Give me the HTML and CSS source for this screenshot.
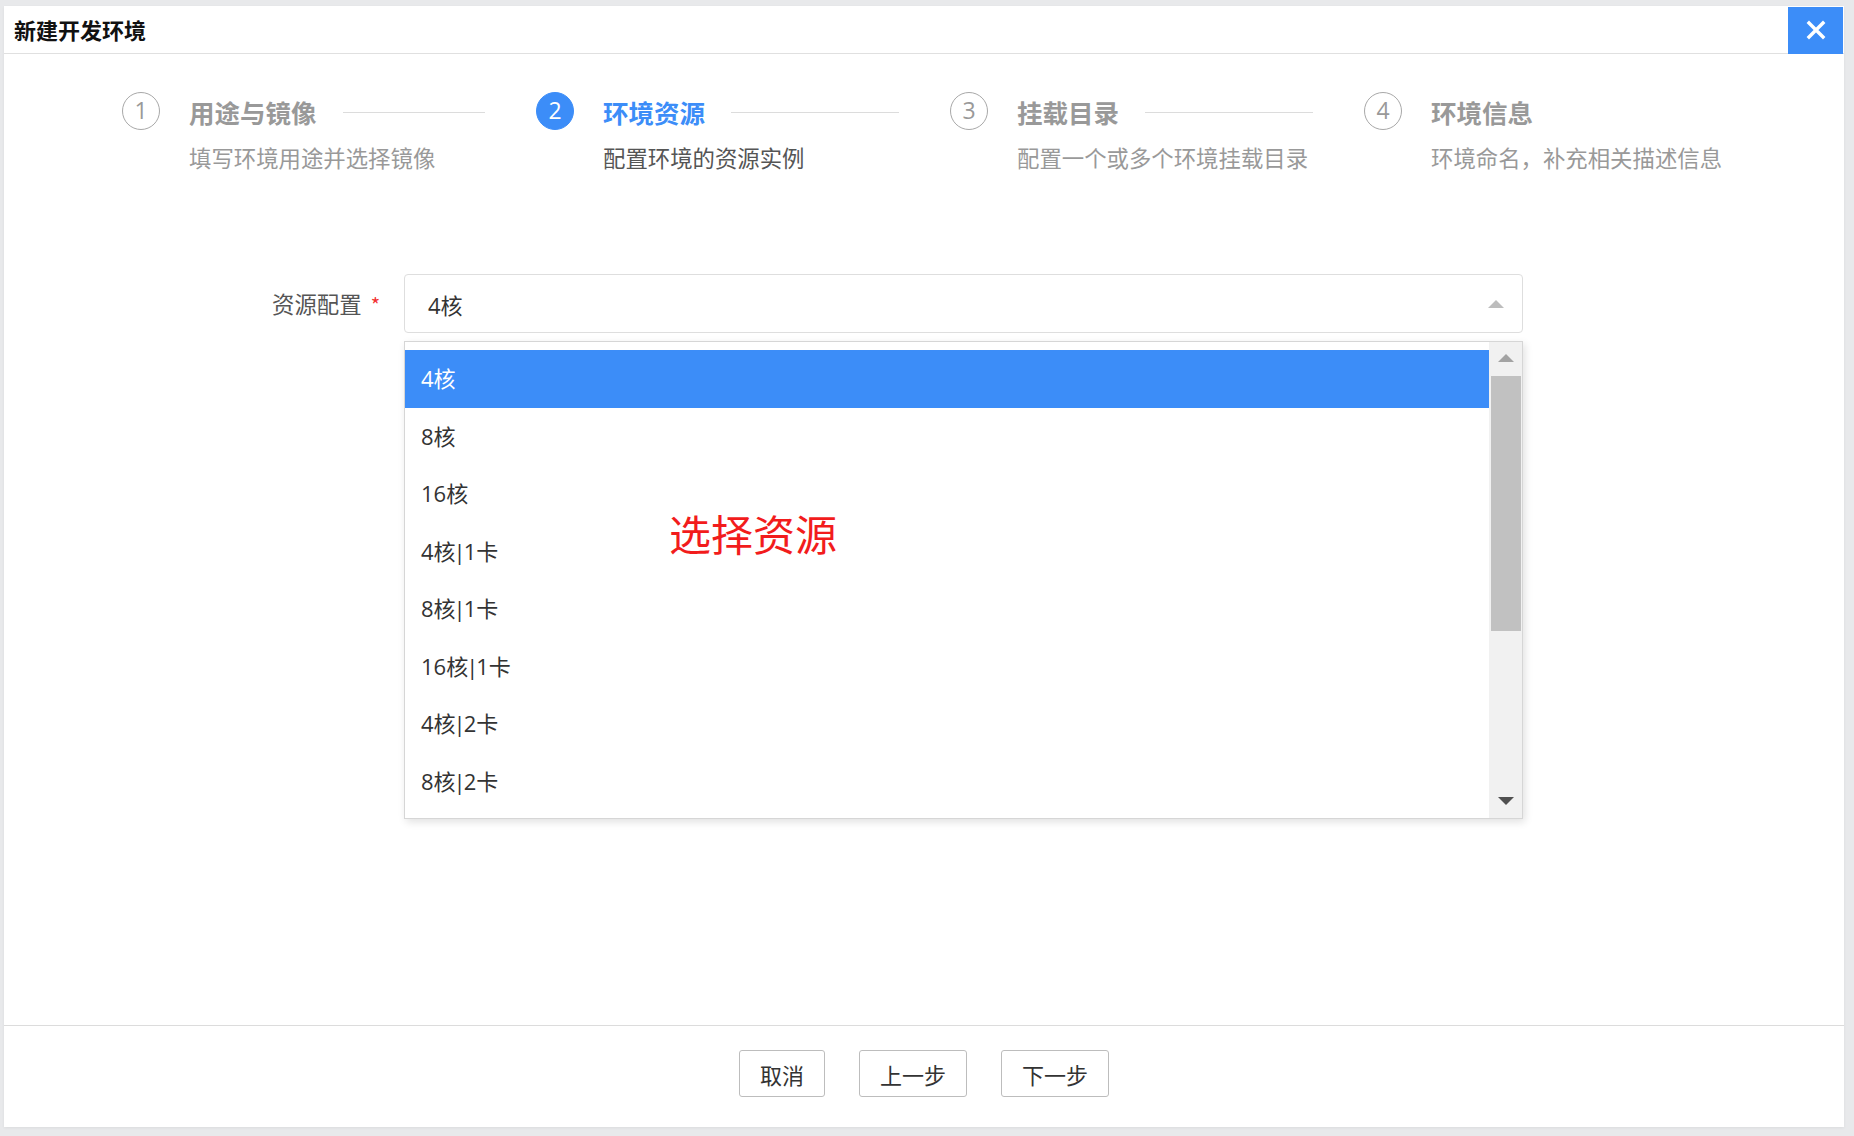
FILE: index.html
```html
<!DOCTYPE html>
<html lang="zh-CN">
<head>
<meta charset="utf-8">
<title>新建开发环境</title>
<link rel="stylesheet" href="styles.css">
</head>
<body>
<div class="dialog">
  <div class="dlg-head">
    <div class="dlg-title">新建开发环境</div>
    <button class="dlg-close" aria-label="关闭">
      <svg width="20" height="20" viewBox="0 0 20 20"><path d="M3 3 L17 17 M17 3 L3 17" stroke="#fff" stroke-width="3.4" stroke-linecap="square"/></svg>
    </button>
  </div>

  <div class="dlg-body">
    <div class="steps">
      <div class="step">
        <span class="num">1</span>
        <div class="stext">
          <div class="shead"><span class="stitle">用途与镜像</span><span class="sline"></span></div>
          <div class="sdesc">填写环境用途并选择镜像</div>
        </div>
      </div>
      <div class="step active">
        <span class="num">2</span>
        <div class="stext">
          <div class="shead"><span class="stitle">环境资源</span><span class="sline"></span></div>
          <div class="sdesc">配置环境的资源实例</div>
        </div>
      </div>
      <div class="step">
        <span class="num">3</span>
        <div class="stext">
          <div class="shead"><span class="stitle">挂载目录</span><span class="sline"></span></div>
          <div class="sdesc">配置一个或多个环境挂载目录</div>
        </div>
      </div>
      <div class="step last">
        <span class="num">4</span>
        <div class="stext">
          <div class="shead"><span class="stitle">环境信息</span></div>
          <div class="sdesc">环境命名，补充相关描述信息</div>
        </div>
      </div>
    </div>

    <div class="form-row">
      <label class="form-label">资源配置<span class="req">*</span></label>
      <div class="select-wrap">
        <div class="select">
          <span class="select-val">4核</span>
          <span class="caret-up"></span>
        </div>
        <div class="dropdown">
          <ul class="options">
            <li class="opt selected">4核</li>
            <li class="opt">8核</li>
            <li class="opt">16核</li>
            <li class="opt">4核<span class="pipe">|</span>1卡</li>
            <li class="opt">8核<span class="pipe">|</span>1卡</li>
            <li class="opt">16核<span class="pipe">|</span>1卡</li>
            <li class="opt">4核<span class="pipe">|</span>2卡</li>
            <li class="opt">8核<span class="pipe">|</span>2卡</li>
          </ul>
          <div class="vscroll">
            <span class="sb-up"></span>
            <span class="sb-thumb"></span>
            <span class="sb-space"></span>
            <span class="sb-down"></span>
          </div>
          <div class="note">选择资源</div>
        </div>
      </div>
    </div>
  </div>

  <div class="dlg-foot">
    <button class="btn">取消</button>
    <button class="btn">上一步</button>
    <button class="btn">下一步</button>
  </div>
</div>
</body>
</html>
```

FILE: styles.css
```css
* { box-sizing: border-box; }
html, body { margin: 0; padding: 0; }
body {
  background: #e8e9eb;
  font-family: "Open Sans", "Noto Sans CJK SC", sans-serif;
  color: #333;
  padding: 6px 10px 0 4px;
  height: 1136px;
  overflow: hidden;
}
.dialog {
  width: 1840px;
  height: 1121px;
  background: #fff;
  display: flex;
  flex-direction: column;
  box-shadow: 0 1px 3px rgba(0,0,0,0.06);
}
.dlg-head {
  height: 48px;
  border-bottom: 1px solid #e0e0e0;
  display: flex;
  align-items: center;
  justify-content: space-between;
  padding-left: 10px;
}
.dlg-title {
  font-family: "Noto Sans CJK SC", sans-serif;
  font-size: 22px;
  font-weight: 700;
  color: #111;
  line-height: 1;
  margin-top: -2px;
}
.dlg-close {
  width: 55px;
  height: 47px;
  margin-top: 1px;
  margin-right: 1px;
  border: 0;
  padding: 0;
  background: #3c8df8;
  display: flex;
  align-items: center;
  justify-content: center;
}
.dlg-body {
  flex: 1;
  position: relative;
}
.steps {
  display: flex;
  padding: 38px 0 0 118px;
}
.step {
  width: 414px;
  display: flex;
  align-items: flex-start;
}
.num {
  flex: none;
  width: 38px;
  height: 38px;
  border: 1px solid #a8a8a8;
  border-radius: 50%;
  color: #999;
  font-family: "Open Sans", sans-serif;
  font-size: 23px;
  line-height: 35px;
  text-align: center;
}
.step.active .num {
  background: #3c8df8;
  border-color: #3c8df8;
  color: #fff;
}
.stext {
  flex: 1;
  margin-left: 29px;
  margin-right: 51px;
}
.shead {
  display: flex;
  align-items: center;
  height: 38px;
  padding-top: 2px;
}
.stitle {
  font-family: "Noto Sans CJK SC", sans-serif;
  font-size: 25.5px;
  font-weight: 700;
  color: #999;
  line-height: 1;
  white-space: nowrap;
}
.step.active .stitle { color: #3c8df8; }
.sline {
  flex: 1;
  height: 1px;
  background: #dcdcdc;
  margin-left: 26px;
}
.sdesc {
  margin-top: 12px;
  font-family: "Noto Sans CJK SC", sans-serif;
  font-size: 22.4px;
  line-height: 30px;
  color: #999;
  white-space: nowrap;
}
.step.active .sdesc { color: #555; }

.form-row {
  display: flex;
  align-items: flex-start;
  margin-top: 102px;
}
.form-label {
  width: 376px;
  text-align: right;
  height: 59px;
  line-height: 59px;
  font-family: "Noto Sans CJK SC", sans-serif;
  font-size: 22.4px;
  color: #555;
  margin-right: 24px;
}
.req {
  color: #f23030;
  margin-left: 9px;
  font-size: 20px;
}
.select-wrap {
  position: relative;
  width: 1119px;
}
.select {
  height: 59px;
  border: 1px solid #dedede;
  border-radius: 4px;
  display: flex;
  align-items: center;
  justify-content: space-between;
  padding: 0 18px 0 23px;
}
.select-val {
  font-family: "Open Sans", "Noto Sans CJK SC", sans-serif;
  font-size: 22px;
  color: #333;
}
.caret-up {
  width: 0;
  height: 0;
  border-left: 8px solid transparent;
  border-right: 8px solid transparent;
  border-bottom: 8px solid #bdbdbd;
}
.dropdown {
  position: absolute;
  left: 0;
  top: 67px;
  width: 1119px;
  height: 478px;
  border: 1px solid #d6d6d6;
  background: #fff;
  box-shadow: 2px 3px 8px rgba(0,0,0,0.12);
  display: flex;
  z-index: 5;
}
.options {
  list-style: none;
  margin: 0;
  padding: 8px 0;
  flex: 1;
}
.opt {
  height: 57.5px;
  line-height: 57.5px;
  padding-left: 16px;
  font-family: "Open Sans", "Noto Sans CJK SC", sans-serif;
  font-size: 22px;
  color: #333;
}
.pipe {
  margin: 0 -2px;
}
.opt.selected {
  background: #3c8df8;
  color: #fff;
}
.vscroll {
  width: 33px;
  background: #f1f1f1;
  display: flex;
  flex-direction: column;
  align-items: center;
}
.sb-up {
  margin-top: 12px;
  width: 0;
  height: 0;
  border-left: 8px solid transparent;
  border-right: 8px solid transparent;
  border-bottom: 8px solid #a3a3a3;
}
.sb-thumb {
  margin-top: 14px;
  width: 30px;
  height: 255px;
  background: #c1c1c1;
}
.sb-space { flex: 1; }
.sb-down {
  margin-bottom: 13px;
  width: 0;
  height: 0;
  border-left: 8px solid transparent;
  border-right: 8px solid transparent;
  border-top: 8px solid #505050;
}
.note {
  position: absolute;
  left: 264px;
  top: 170px;
  font-family: "Noto Sans CJK SC", sans-serif;
  font-size: 42px;
  line-height: 1;
  color: #f21c1c;
}

.dlg-foot {
  height: 102px;
  border-top: 1px solid #dcdcdc;
  display: flex;
  justify-content: center;
  align-items: flex-start;
  padding-top: 24px;
  gap: 34px;
}
.btn {
  height: 47px;
  padding: 0 20px;
  border: 1px solid #bdbdbd;
  border-radius: 3px;
  background: #fff;
  font-family: "Noto Sans CJK SC", sans-serif;
  font-size: 22px;
  color: #333;
}
```
